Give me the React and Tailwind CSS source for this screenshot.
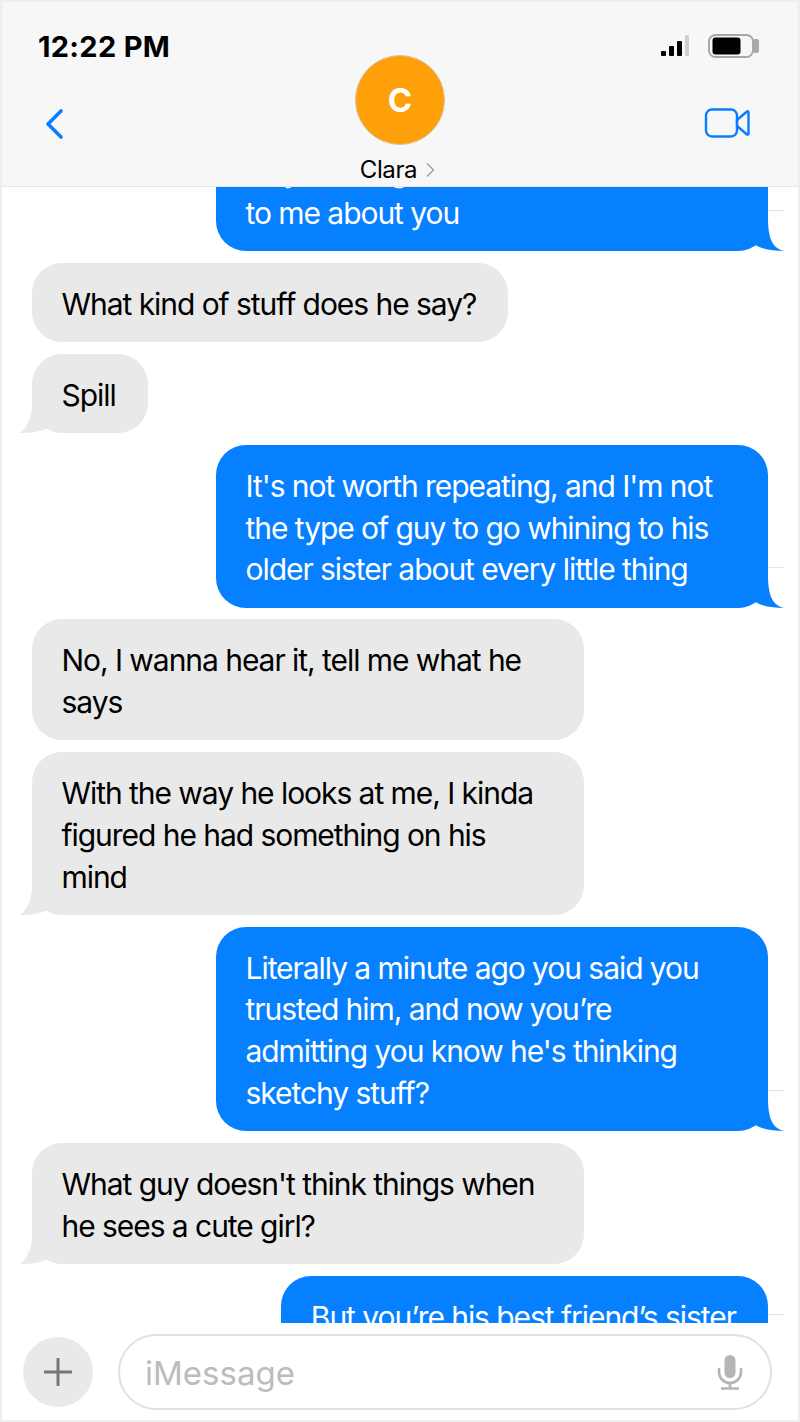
const FONT = "font-['Inter','Liberation_Sans',sans-serif]";

const MESSAGES = [
  { me: true, text: <>Guy's telling stuff<br />to me about you</>, tail: true, full: true },
  { text: "What kind of stuff does he say?" },
  { text: "Spill", tail: true },
  { me: true, text: "It's not worth repeating, and I'm not the type of guy to go whining to his older sister about every little thing", tail: true },
  { text: "No, I wanna hear it, tell me what he says" },
  { text: "With the way he looks at me, I kinda figured he had something on his mind", tail: true },
  { me: true, text: "Literally a minute ago you said you trusted him, and now you’re admitting you know he's thinking sketchy stuff?", tail: true },
  { text: "What guy doesn't think things when he sees a cute girl?", tail: true },
  { me: true, text: "But you’re his best friend’s sister", tail: true },
];

function Tail({ me }) {
  if (me) {
    return (
      <svg className="absolute right-[-16px] bottom-0" width="50" height="34" viewBox="0 0 50 34">
        <path d="M34 0 C34 16 36 31 50 34 C40 34 28 33 20 27 C14 32 6 34 0 34 L0 0 Z" fill="#0780ff" />
      </svg>
    );
  }
  return (
    <svg className="absolute left-[-12px] bottom-0" width="50" height="34" viewBox="0 0 50 34">
      <path d="M12 0 C13 14 9 27 0 34 C10 34 20 33 28 29 C34 33 42 34 50 34 L50 0 Z" fill="#e9e9e9" />
    </svg>
  );
}

function Bubble({ me, text, tail, full }) {
  return (
    <div
      className={
        me
          ? `relative self-end max-w-[552px] rounded-[30px] bg-[#0780ff] pl-[29.5px] pr-[32px] pt-[21px] pb-[16.5px] text-white ${full ? "w-[552px]" : ""}`
          : "relative self-start max-w-[552px] rounded-[30px] bg-[#e9e9e9] pl-[29.5px] pr-[32px] pt-[21px] pb-[16.5px] text-black"
      }
    >
      {tail && <Tail me={me} />}
      {me && <div className="absolute right-[-16px] bottom-[40px] h-px w-4 bg-[#d3e6fb]" />}
      <div className="relative">{text}</div>
    </div>
  );
}

function Signal() {
  return (
    <svg width="30" height="24" viewBox="0 0 30 24">
      <rect x="1" y="17" width="5" height="5" rx="1" fill="#000" />
      <rect x="9" y="12" width="5" height="10" rx="1" fill="#000" />
      <rect x="17" y="7" width="5" height="15" rx="1" fill="#000" />
      <rect x="25" y="1" width="4" height="21" rx="1" fill="#cfcfcf" />
    </svg>
  );
}

function Battery() {
  return (
    <svg width="51" height="24" viewBox="0 0 51 24">
      <rect x="1" y="1" width="44" height="22" rx="6.5" fill="none" stroke="#a8a8a8" strokeWidth="2" />
      <rect x="4.5" y="3.5" width="28" height="17" rx="3" fill="#000" />
      <path d="M46 5 h3 a2 2 0 0 1 2 2 v10 a2 2 0 0 1 -2 2 h-3 Z" fill="#a8a8a8" />
    </svg>
  );
}

export default function App() {
  return (
    <div className={`${FONT} flex h-[1422px] w-[800px] flex-col overflow-hidden border-2 border-[#eeeeee] bg-white`}>
      {/* header */}
      <div className="z-10 grid h-[185px] shrink-0 grid-cols-[1fr_auto_1fr] border-b border-[#e6e6e6] bg-[#f6f7f6]">
        <div className="flex flex-col items-start pl-[36px] pt-[28px]">
          <div className="text-[29px] leading-[34px] font-bold tracking-[0.3px] text-black">12:22 PM</div>
          <svg className="mt-[43px] ml-[6px]" width="22" height="34" viewBox="0 0 22 34">
            <path d="M17 4 L4 17 L17 30" fill="none" stroke="#0a7cff" strokeWidth="3.6" strokeLinecap="round" strokeLinejoin="round" />
          </svg>
        </div>

        <div className="flex flex-col items-center pt-[53px]">
          <div className="flex h-[90px] w-[90px] items-center justify-center rounded-full border border-[#d6c4a6] bg-[#ff9f0a] pt-[2px] text-[33px] font-bold text-white">
            C
          </div>
          <div className="mt-[9px] mr-[5px] flex items-center text-[24px] leading-[32px] tracking-[-0.4px] text-black">
            Clara
            <svg className="ml-[9px]" width="9" height="16" viewBox="0 0 9 16">
              <path d="M1 1.5 L7.5 8 L1 14.5" fill="none" stroke="#9a9a9a" strokeWidth="1.3" />
            </svg>
          </div>
        </div>

        <div className="flex flex-col items-end pt-[32px] pr-[39px]">
          <div className="flex items-center gap-[18px]">
            <Signal />
            <Battery />
          </div>
          <svg className="mt-[50px] mr-[9px]" width="46" height="30" viewBox="0 0 46 30">
            <rect x="2" y="1.5" width="31" height="27" rx="6" fill="none" stroke="#0a7cff" strokeWidth="2.4" />
            <path d="M33 12 L43 3.5 Q44.5 2.8 44.5 4.5 V25.5 Q44.5 27.2 43 26.5 L33 18 Z" fill="none" stroke="#0a7cff" strokeWidth="2.4" strokeLinejoin="round" />
          </svg>
        </div>
      </div>

      {/* messages */}
      <div className="min-h-0 flex-1 overflow-hidden">
        <div className="mt-[-57px] flex flex-col gap-[11.75px] pl-[30px] pr-[30px] text-[30px] leading-[41.75px] tracking-[-1.05px]">
          {MESSAGES.map((m, i) => (
            <Bubble key={i} {...m} />
          ))}
        </div>
      </div>

      {/* input bar */}
      <div className="z-10 flex h-[97px] shrink-0 items-start gap-[25px] bg-white pl-[21px] pt-[11px]">
        <div className="mt-[3px] flex h-[70px] w-[70px] shrink-0 items-center justify-center rounded-full bg-[#e9e9e9]">
          <svg width="28" height="28" viewBox="0 0 28 28">
            <path d="M14 1 V27 M1 14 H27" stroke="#767676" strokeWidth="3" strokeLinecap="round" />
          </svg>
        </div>
        <div className="flex h-[76px] w-[654px] items-center justify-between rounded-full border-[2.5px] border-[#e1e1e1] pl-[25px] pr-[27px]">
          <span className="mt-[3px] text-[33px] text-[#bcbcbc]">iMessage</span>
          <svg width="26" height="36" viewBox="0 0 26 36">
            <rect x="7.5" y="1" width="11" height="23" rx="5.5" fill="#b5b5b5" />
            <path d="M2 15 V18 A11 11 0 0 0 24 18 V15" fill="none" stroke="#b5b5b5" strokeWidth="2.6" strokeLinecap="round" />
            <path d="M13 29 V34 M4 34.5 H22" stroke="#b5b5b5" strokeWidth="2.6" />
          </svg>
        </div>
      </div>
    </div>
  );
}
